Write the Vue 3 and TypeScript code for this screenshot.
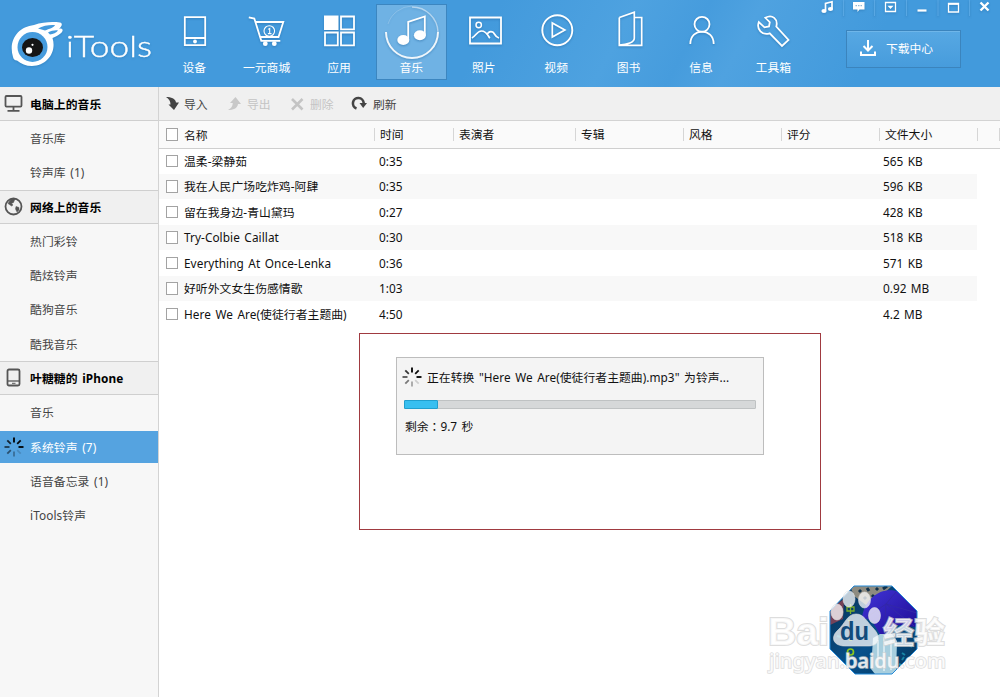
<script setup lang="ts">
interface NavItem { label: string; icon: string; active?: boolean }
interface SideItem { label: string; selected?: boolean }
interface SideGroup { title: string; icon: string; items: SideItem[] }
interface Track { name: string; time: string; size: string }

// Navigation icons share a 72 x 60 canvas centred on x = 36.
const nav: NavItem[] = [
  { label: '设备', icon: '<path d="M26.800 17.200h20.400v28H26.800zM26.800 38h20.400" stroke-width="1.800"/><circle cx="37" cy="41.500" r="1.900" fill="#fff" stroke="none"/>' },
  { label: '一元商城', icon: '<g transform="translate(-1.200 0)"><path d="M19 17.300l5.500 1.200 7 22.300h19M26 22h27.500l-4.800 15H30.500" stroke-width="1.800"/><circle cx="39.500" cy="31" r="5.300" stroke-width="1.100"/><path d="M38.300 29.400l1.600-1v5M38.100 33.600h3.600" stroke-width="1.100"/><circle cx="35.500" cy="43.700" r="2.400" fill="#fff" stroke="none"/><circle cx="44.500" cy="43.700" r="2.400" fill="#fff" stroke="none"/></g>' },
  { label: '应用', icon: '<path d="M21 15.500h14.500V30H21z" fill="#fff" stroke="none"/><path d="M38 16.500h13v12.800H38zM22 32.500h12.800v12.800H22zM38 32.500h13v12.800H38z" stroke-width="1.800"/>' },
  { label: '音乐', active: true, icon: '<path d="M11 32a26 26 0 0 0 52 0" stroke-width="2" opacity=".9"/><path d="M63 32a26 26 0 0 0-26-25" stroke-width="1.400" opacity=".5"/><path d="M37 6a26 26 0 0 0-24 18" stroke-width="1" opacity=".2"/><path d="M33.200 40V22l16.600-5.500V35" stroke-width="1.800"/><ellipse cx="28.300" cy="40" rx="6" ry="5" fill="#fff" stroke="none"/><ellipse cx="44.900" cy="35.200" rx="6" ry="5" fill="#fff" stroke="none"/>' },
  { label: '照片', icon: '<path d="M22 17.500h31v26H22z" stroke-width="1.800"/><circle cx="30.700" cy="25" r="2.700" stroke-width="1.500"/><path d="M23.800 38c4-1.500 5-7 9.700-7s6 3.700 8.300 7.200M38.800 35c2-4.500 6-4.500 8-.500 1 2 2.500 3 4.200 3.500" stroke-width="1.700"/>' },
  { label: '视频', icon: '<circle cx="37.300" cy="30.300" r="15" stroke-width="1.900"/><path d="M32.300 23v14l12.600-7z" stroke-width="1.700"/>' },
  { label: '图书', icon: '<path d="M26.300 17.500v27.800h22.400V17.500h-7.400M26.300 17.500l15-5.300v26c0 4-7 6.500-15 6.900" stroke-width="1.700"/>' },
  { label: '信息', icon: '<ellipse cx="37" cy="24.300" rx="7.500" ry="7.500" stroke-width="1.800"/><path d="M25.300 44c0-16.500 23.400-16.500 23.400 0" stroke-width="1.800"/>' },
  { label: '工具箱', icon: '<path d="M28.300 17.800c7-3.800 13 1.200 11 8.700l12.200 13.500-6.500 6-12.300-12.700c-7.500 2.500-13.500-4-10.900-11.300l5.700 5.300 4.500-.8.800-4.300z" stroke-width="1.800"/>' },
]

const groups: SideGroup[] = [
  {
    title: '电脑上的音乐',
    icon: '<rect x="1.500" y="2" width="16" height="10.600" rx="1"/><path d="M9.500 12.600v4M3.500 16.800h12"/>',
    items: [{ label: '音乐库' }, { label: '铃声库 (1)' }],
  },
  {
    title: '网络上的音乐',
    icon: '<circle cx="9.500" cy="9.500" r="8"/><path d="M5.500 4l2-2h3.500l-1.500 3.500-2 1 1.500 1.500-1.500 1-3.500-2.500zM12 9.500l3 1v2.500l-2 2-1.500-3z" fill="#555" stroke-width=".5"/>',
    items: [{ label: '热门彩铃' }, { label: '酷炫铃声' }, { label: '酷狗音乐' }, { label: '酷我音乐' }],
  },
  {
    title: '叶糖糖的 iPhone',
    icon: '<rect x="3.500" y="1.500" width="12" height="16" rx="1.500"/><path d="M3.500 13h12" stroke-width="1.300"/><path d="M8 15.300h3.500" stroke-width="1"/>',
    items: [{ label: '音乐' }, { label: '系统铃声 (7)', selected: true }, { label: '语音备忘录 (1)' }, { label: 'iTools铃声' }],
  },
]

const spokes: number[] = [1, 0.95, 1, 0.15, 0.32, 0.5, 0.65, 0.78]

const columns: string[] = ['时间', '表演者', '专辑', '风格', '评分', '文件大小', '']

const tracks: Track[] = [
  { name: '温柔-梁静茹', time: '0:35', size: '565 KB' },
  { name: '我在人民广场吃炸鸡-阿肆', time: '0:35', size: '596 KB' },
  { name: '留在我身边-青山黛玛', time: '0:27', size: '428 KB' },
  { name: 'Try-Colbie Caillat', time: '0:30', size: '518 KB' },
  { name: 'Everything At Once-Lenka', time: '0:36', size: '571 KB' },
  { name: '好听外文女生伤感情歌', time: '1:03', size: '0.92 MB' },
  { name: 'Here We Are(使徒行者主题曲)', time: '4:50', size: '4.2 MB' },
]

const progress = 9.8
</script>

<template>
  <div class="window">
    <header class="top">
      <svg class="logo" width="158" height="84" viewBox="0 0 158 84">
        <path d="M13 57C8 40 18 27 34 25c9-3 18-3.500 26-2.500 3 .5 2 4-1 6 4-.5 5 2 1.500 5-2 2-5 3-8 4.500C57 52 47 66 32 66c-6 0-11-2-15-5.500-2.500 0-3.500-1.500-4-3.500z" fill="#fff" />
        <path d="M38 28.500c5-3 12-4 17-3.500-1 2.500-6 4-10 5.500zM48 32.500c3-1.500 7-2.500 10-2-1.500 2.500-5 3.500-8 4z" fill="#459bdd" />
        <circle cx="32.500" cy="47" r="15" fill="#459bdd" />
        <ellipse cx="32.500" cy="47.500" rx="10.500" ry="9.500" fill="#151515" />
        <circle cx="29" cy="50.500" r="3.200" fill="#fff" />
        <circle cx="32.500" cy="44.800" r="1.100" fill="#fff" />
        <text x="66" y="57.300" textLength="86" lengthAdjust="spacingAndGlyphs">iTools</text>
      </svg>

      <nav class="nav">
        <div v-for="n in nav" :key="n.label" class="nav-item" :class="{ active: n.active }">
          <svg width="72" height="60" viewBox="0 0 72 60" v-html="n.icon"></svg>
          <span>{{ n.label }}</span>
        </div>
      </nav>

      <div class="right">
        <svg class="controls" width="190" height="18" viewBox="810 0 190 18">
          <path d="M843.500 0v16M874.500 0v16M906.500 0v16M938 0v16M969.500 0v16" stroke="#58a7e3" />
          <g fill="none" stroke="#fff" stroke-width="1.700">
            <path d="M825.500 10.500V3.500l6.500-1.700v7" />
            <path d="M885.500 2.500h10v9h-10z" stroke-width="1.300" />
            <path d="M917.500 10.500h9" stroke-width="2.200" />
            <path d="M948.500 3.500h10v8.500h-10z" stroke-width="1.300" /><path d="M948 4h11" />
            <path d="M980.500 2.500l8 8M988.500 2.500l-8 8" stroke-width="2.400" />
          </g>
          <g fill="#fff">
            <ellipse cx="824" cy="11" rx="2.600" ry="2" /><ellipse cx="830.500" cy="9" rx="2.600" ry="2" />
            <path d="M853 2h11.500v7.500h-5L857.500 12V9.500H853zM887.500 5.700h6l-3 3.300z" />
          </g>
          <path d="M855.500 5.700h1.500M858 5.700h1.500M860.500 5.700h1.500" stroke="#78a8cc" />
        </svg>
        <div class="download">
          <svg width="18" height="18" viewBox="0 0 18 18"><path d="M9 1v10M4.500 7L9 11.500 13.500 7M2 12.500V16h14v-3.500" /></svg>
          <span>下载中心</span>
        </div>
      </div>
    </header>

    <div class="body">
      <aside class="side">
        <section v-for="g in groups" :key="g.title">
          <h2>
            <svg width="19" height="19" viewBox="0 0 19 19" v-html="g.icon"></svg>
            <span>{{ g.title }}</span>
          </h2>
          <div v-for="i in g.items" :key="i.label" class="side-item" :class="{ selected: i.selected }">
            <svg v-if="i.selected" class="spinner" width="20" height="20" viewBox="-10 -10 20 20">
              <path v-for="(o, k) in spokes" :key="k" d="M0-4.500v-5" :opacity="o" :transform="`rotate(${k * 45})`" />
            </svg>
            <span>{{ i.label }}</span>
          </div>
        </section>
      </aside>

      <main class="main">
        <div class="toolbar">
          <div class="tool t1">
            <svg width="14" height="14" viewBox="0 0 14 14"><path d="M0 0c5 0 9.500 1.500 10 5.500h3L8 13 2.500 7.500h2C4.500 4 3 2 0 0z" fill="#444" /></svg><span>导入</span>
          </div>
          <div class="tool t2 off">
            <svg width="14" height="14" viewBox="0 0 14 14"><path d="M0 13c5 0 9.500-1.500 10-6h3L7.500 0 2 6h2.800C4.700 9.500 3 11.500 0 13z" fill="#c8c8c8" /></svg><span>导出</span>
          </div>
          <div class="tool t3 off">
            <svg width="14" height="14" viewBox="0 0 14 14"><path d="M2 2l10.500 10.500M12.500 2L2 12.500" stroke="#c4c4c4" stroke-width="2.600" /></svg><span>删除</span>
          </div>
          <div class="tool t4">
            <svg width="16" height="15" viewBox="0 0 16 15"><path d="M5.500 12.500A5.400 5.400 0 1 1 12.700 7" fill="none" stroke="#444" stroke-width="2.600" /><path d="M8.500 7H16l-3.800 5z" fill="#444" /></svg><span>刷新</span>
          </div>
        </div>

        <div class="grid head">
          <div class="name"><i class="check"></i>名称</div>
          <div v-for="(c, k) in columns" :key="k" class="col">{{ c }}</div>
          <div class="col"></div>
        </div>
        <div class="rows">
          <div v-for="t in tracks" :key="t.name" class="grid row">
            <div class="name"><i class="check"></i>{{ t.name }}</div>
            <div class="time">{{ t.time }}</div>
            <div class="size">{{ t.size }}</div>
          </div>
        </div>

        <div class="frame">
          <div class="dialog">
            <div class="status">
              <svg class="spinner" width="20" height="20" viewBox="-10 -10 20 20">
                <path v-for="(o, k) in spokes" :key="k" d="M0-4.500v-5" :opacity="o" :transform="`rotate(${k * 45})`" />
              </svg>
              <span>正在转换 "Here We Are(使徒行者主题曲).mp3" 为铃声...</span>
            </div>
            <div class="bar"><div class="fill" :style="{ width: progress + '%' }"></div></div>
            <div class="left">剩余<span class="colon">：</span>9.7 秒</div>
          </div>
        </div>
      </main>
    </div>

    <svg class="mark" width="190" height="100" viewBox="765 582 190 100">
      <defs>
        <clipPath id="oct"><path d="M854 586h38l25 25v38l-25 25h-37l-25-25v-38z" /></clipPath>
        <linearGradient id="night" x2="1" y2="1"><stop offset="0" stop-color="#082d4e" /><stop offset=".55" stop-color="#07508b" /><stop offset="1" stop-color="#043456" /></linearGradient>
        <linearGradient id="dome" x2="1" y2="1"><stop offset="0" stop-color="#4134d6" /><stop offset="1" stop-color="#1c0a91" /></linearGradient>
      </defs>
      <g clip-path="url(#oct)">
        <path d="M828 584h92v92h-92z" fill="url(#night)" />
        <path d="M850 586h42l-10 9-16 10-12-9z" fill="#8d8b80" />
        <path d="M859 590l2 2M867 588l2 3M876 590l2-2M872 597l2-2M864 597l2 2M887 586l-4 3" stroke="#12324b" stroke-width="3" />
        <path d="M830 609l14-10-1 20-13 6z" fill="#a24552" opacity=".7" />
        <path d="M862 617c4-20 20-31 38-25 12 5 17 14 17 22l-1 13-20-2-14 13-10-17z" fill="url(#dome)" />
        <path d="M886 604l-23 16M886 604l-2 31M886 604l31 9M886 604l10-12M886 604l28 22" stroke="#3328a8" fill="none" />
        <path d="M873 638l7-4h12l5 7-1 33h-21l-4-5z" fill="#a7cede" />
        <path d="M878 640v28M884 637v34M891 639v31" stroke="#d2e7ef" stroke-width="2" />
        <path d="M902 653l3 2M909 645l3 2M899 664l2 1M904 657l-2 3M837 636l4 1" stroke="#1685a5" stroke-width="2" />
        <circle cx="850.500" cy="652" r="3" stroke="#8bc720" stroke-width="1.700" fill="none" />
        <path d="M847 607h7v4h-7zM850.500 604v10M848 620l4 3M849 640h3" stroke="#79ae2a" stroke-width="1.300" fill="none" />
      </g>
      <path d="M854 586h38l25 25v38l-25 25h-37l-25-25v-38z" fill="none" stroke="#2389d7" />
      <g fill="#fff" fill-opacity=".75" stroke="#ddd" stroke-opacity=".6">
        <ellipse cx="837" cy="612" rx="6" ry="8" /><ellipse cx="849" cy="599" rx="6" ry="8" /><ellipse cx="864.500" cy="600" rx="6" ry="8" /><ellipse cx="874.500" cy="615.500" rx="6" ry="8" />
        <path d="M856 614c8 0 11 8 17 14 9 9 6 18-4 18h-24c-12 0-15-9-7-16 7-6 9-16 18-16z" />
      </g>
      <g class="letters">
        <text x="768" y="645" font-size="38" textLength="61" lengthAdjust="spacingAndGlyphs">Bai</text>
        <text x="883" y="643" font-size="30" textLength="62" lengthAdjust="spacingAndGlyphs" class="cjk">经验</text>
        <text x="769" y="668" font-size="19" textLength="177" lengthAdjust="spacingAndGlyphs" class="url">jingyan.baidu.com</text>
      </g>
      <text x="840" y="640" font-size="25" font-weight="bold" fill="#124b7b" textLength="29" lengthAdjust="spacingAndGlyphs">du</text>
    </svg>
  </div>
</template>

<style>
body { margin: 0; overflow: hidden; }
</style>

<style scoped>
.window { position: relative; width: 1000px; height: 697px; overflow: hidden; background: #fff; color: #111; font: 12px/16px "Noto Sans", "Noto Sans CJK SC", sans-serif; white-space: nowrap; word-spacing: 1.4px; }
.top { display: flex; height: 87px; background: linear-gradient(118deg, #439adc 0 48%, #4ea2e0 61%, #469cdd 68%, #4fa2e0 73%, #429adc 86%); }
.logo { flex: none; width: 158px; filter: drop-shadow(0 1px 1px #1e68a466); }
.logo text { font-family: Lato, "Open Sans", sans-serif; font-weight: 300; font-size: 29px; fill: #fff; stroke: #fff; stroke-width: 0.35px; }
.nav { display: flex; }
.nav-item { box-sizing: border-box; width: 72.4px; height: 80px; display: flex; flex-direction: column; align-items: center; color: #fff; }
.nav-item svg { flex: none; overflow: visible; fill: none; stroke: #fff; filter: drop-shadow(0 1px 1px #1b5f9977); }
.nav-item span { margin-top: -1px; font-size: 11.8px; }
.active { position: relative; background: linear-gradient(#6fb2e4, #6fb2e4) 0.8px 4px / 71px 76px no-repeat; }
.active::after { content: ""; position: absolute; left: 0.8px; top: 4px; width: 69px; height: 74px; border: 1px solid #3c86c0; }
.right { display: flex; flex-direction: column; align-items: flex-end; width: 190.4px; }
.controls { filter: drop-shadow(0 1px 1px #1b5f9966); }
.download { box-sizing: border-box; display: flex; align-items: center; width: 115px; height: 38px; margin: 12px 39px 0 0; padding: 0 0 2px 12px; gap: 9px; border: 1px solid #3b84bd; background: linear-gradient(#57a8e3, #479cdc); box-shadow: inset 0 1px #6fb6e9; color: #fff; font-size: 11.8px; }
.download svg { fill: none; stroke: #fff; stroke-width: 2; }
.body { display: flex; height: 610px; }
.side { box-sizing: border-box; width: 159px; flex: none; background: #f7f7f7; border-right: 1px solid #d3d3d3; }
.side h2 { box-sizing: border-box; display: flex; align-items: center; gap: 7px; height: 34px; margin: 0; padding-left: 4px; font-size: 11.8px; line-height: 16px; font-weight: 700; color: #000; background: #f0f0f0; border-bottom: 1px solid #cfcfcf; }
.side section + section h2 { border-top: 1px solid #cfcfcf; height: 34.2px; }
.side h2 span { letter-spacing: 0.1px; }
.side h2 svg { flex: none; fill: none; stroke: #555; stroke-width: 1.8; }
.side-item { box-sizing: border-box; height: 34.25px; padding-left: 30px; display: flex; align-items: center; font-size: 11.8px; color: #444; }
.side-item span { letter-spacing: 0.1px; }
.selected { height: 32px; width: 158px; margin: 1.5px 0 0.75px; padding-left: 4px; gap: 6px; background: #55a3e0; color: #fff; }
.spinner { flex: none; stroke: #000; stroke-width: 1.8; }
.main { flex: 1; min-width: 0; position: relative; }
.toolbar { box-sizing: border-box; display: flex; height: 34px; background: #f0f0f0; border-bottom: 1px solid #d3d3d3; padding-left: 7px; }
.tool { display: flex; align-items: center; gap: 4px; font-size: 11.8px; color: #444; }
.off { color: #c4c4c4; }
.t1 { width: 62px; }
.t2 { width: 62px; gap: 5px; }
.t3 { width: 61px; gap: 6px; }
.t4 { gap: 6px; }
.grid { box-sizing: border-box; display: grid; align-items: center; }
.head { grid-template-columns: 215px 79px 122px 108px 98px 98px 98px 22px 1px; height: 28px; background: #fafafa; border-bottom: 1px solid #cfcfcf; font-size: 11.8px; }
.head .col { height: 13px; line-height: 13px; padding-left: 5px; border-left: 1px solid #d6d6d6; }
.name { display: flex; align-items: center; padding-left: 6.5px; gap: 6px; }
.check { box-sizing: border-box; flex: none; width: 12.5px; height: 12.5px; border: 1px solid #a3a3a3; background: #fff; }
.rows { margin-top: -0.9px; }
.row { grid-template-columns: 220px 504px 94px; width: 818px; height: 25.5px; font-size: 11.8px; }
.row .name { letter-spacing: 0.06px; }
.row:nth-child(even) { background: #f8f8f8; }
.frame { position: absolute; left: 199.5px; top: 246px; box-sizing: border-box; width: 462px; height: 197px; padding: 23px 36px; border: 1px solid #a03a40; }
.dialog { box-sizing: border-box; width: 368px; height: 98px; padding: 9px 7px; background: #f4f4f4; border: 1px solid #bdbdbd; }
.status { display: flex; align-items: center; gap: 5px; height: 20px; margin-left: -1.5px; font-size: 11.8px; letter-spacing: 0.05px; }
.bar { box-sizing: border-box; width: 352px; height: 9px; margin-top: 13px; background: #d6d8d9; border: 1px solid #bfc2c3; border-radius: 1px; }
.fill { box-sizing: border-box; height: 9px; margin: -1px; border: 1px solid #219fce; border-radius: 1px; background: #38bff0; }
.left { margin: 9px 0 0 1.5px; font-size: 11.8px; }
.colon { font-family: "Noto Sans CJK TC", sans-serif; }
.mark { position: absolute; left: 765px; top: 582px; font-family: "Liberation Sans", sans-serif; }
.letters { fill: #fff; fill-opacity: 0.8; stroke: #d2d2d2; stroke-opacity: 0.75; stroke-width: 2; paint-order: stroke; font-weight: 700; }
.letters .cjk { font-family: "Noto Sans CJK SC", sans-serif; }
.letters .url { font-family: "Noto Sans", sans-serif; font-weight: 500; stroke-width: 1.5; }
</style>
